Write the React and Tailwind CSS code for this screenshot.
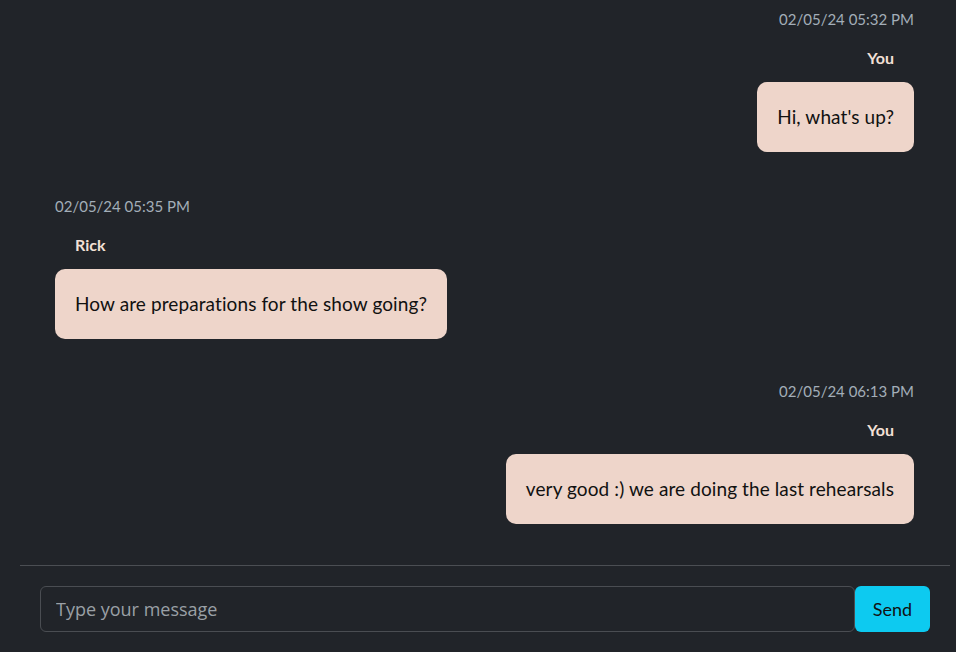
import React, { useState } from 'react';

const messages = [
  { id: 1, time: '02/05/24 05:32 PM', author: 'You', text: "Hi, what's up?", mine: true },
  { id: 2, time: '02/05/24 05:35 PM', author: 'Rick', text: 'How are preparations for the show going?', mine: false },
  { id: 3, time: '02/05/24 06:13 PM', author: 'You', text: 'very good :) we are doing the last rehearsals', mine: true },
];

function Message({ msg, first }) {
  return (
    <div className={`flex flex-col ${msg.mine ? 'items-end' : 'items-start'} ${first ? 'mb-[43px]' : 'mb-[41px]'}`}>
      <div className="text-[15px] leading-[22px] text-[#a3aeb8] mb-[17px]">{msg.time}</div>
      <div className="text-[16px] leading-[22px] font-bold text-[#f3e0d6] px-5 mb-[13px]">{msg.author}</div>
      <div className="bg-[#eed5ca] text-[#111] text-[19px] leading-[28px] tracking-[0.1px] rounded-[10px] px-5 py-[21px]">
        {msg.text}
      </div>
    </div>
  );
}

export default function App() {
  const [draft, setDraft] = useState('');

  return (
    <div className="w-full h-[652px] bg-[#212429] flex flex-col overflow-hidden" style={{ fontFamily: 'Lato, "Open Sans", sans-serif' }}>
      {/* Messages */}
      <div className="flex-1 min-h-0 overflow-hidden pl-[55px] pr-[42px] pt-[8px]">
        {messages.map((m, i) => (
          <Message key={m.id} msg={m} first={i === 0} />
        ))}
      </div>

      {/* Composer */}
      <div className="shrink-0 ml-5 mr-[6px] border-t border-[#4b4e53] pt-5 pb-5 pl-5 pr-5">
        <div className="flex items-stretch h-[46px]">
          <input
            value={draft}
            onChange={(e) => setDraft(e.target.value)}
            placeholder="Type your message"
            className="flex-1 bg-transparent border border-[#4a4d52] rounded-[6px] px-[15px] text-[18px] text-[#dee2e6] placeholder:text-[#9aa0a6] focus:outline-none"
            style={{ fontFamily: '"Open Sans", sans-serif' }}
          />
          <button className="w-[75px] bg-[#0dcaf0] rounded-[6px] text-[18px] text-[#111]">
            Send
          </button>
        </div>
      </div>
    </div>
  );
}
